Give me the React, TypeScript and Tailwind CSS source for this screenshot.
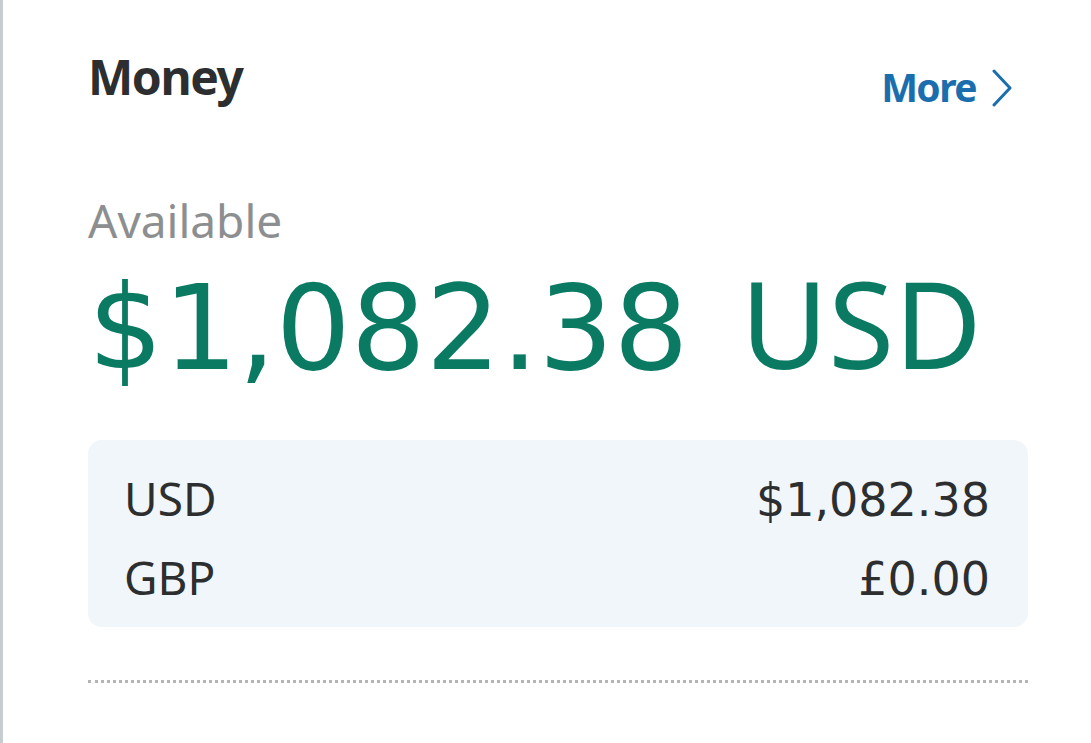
import React from 'react'

const sans = { fontFamily: '"Noto Sans", "Open Sans", sans-serif' }
const nums = { fontFamily: '"DejaVu Sans", "Noto Sans", sans-serif' }

const balances = [
  { code: 'USD', amount: '$1,082.38' },
  { code: 'GBP', amount: '£0.00' },
]

const App: React.FC = () => {
  return (
    <div className="h-[743px] w-full overflow-hidden bg-white border-l-[3px] border-[#c6ccd0]" style={sans}>
      <div className="pl-[85px] pr-[63px]">
        {/* Header */}
        <div className="flex justify-between">
          <h2 className="pt-[53px] text-[48px] leading-[48px] font-bold tracking-[-0.03em] text-[#2c2e2f]">Money</h2>
          <a className="pt-[67px] pr-[15px] flex items-start gap-[15px] text-[39px] leading-[39px] font-bold tracking-[-0.04em] text-[#1a6eae]">
            <span>More</span>
            <svg width="22" height="38" viewBox="0 0 22 38" className="mt-[2px]" fill="none">
              <polyline points="3,2 19,19 3,36" stroke="#1a6eae" strokeWidth="3" strokeLinecap="round" strokeLinejoin="round" />
            </svg>
          </a>
        </div>

        {/* Available */}
        <div className="pt-[90px] text-[46px] leading-[46px] text-[#8c8e90]">Available</div>
        <div className="pt-[20px] text-[120px] leading-[120px] text-[#0b7a63] whitespace-nowrap">
          <span style={nums} className="text-[118px]">$1,082.38</span>
          <span className="ml-[52px]">USD</span>
        </div>

        {/* Per-currency balances */}
        <div className="mt-[52px] rounded-[14px] bg-[#f1f6fb] pl-[36px] pr-[38px] pt-[20px] pb-[9px] text-[#2c2e2f]">
          {balances.map((b) => (
            <div key={b.code} className="flex items-baseline justify-between">
              <span className="text-[46px] leading-[77px]">{b.code}</span>
              <span style={nums} className="text-[46px] leading-[77px]">{b.amount}</span>
            </div>
          ))}
        </div>

        <div className="mt-[53px] border-t-[3px] border-dotted border-[#b4b4b4]" />

        <div className="pt-[56px] text-[46px] leading-[46px] font-bold text-[#1a6eae]">Transfer Money</div>
      </div>
    </div>
  )
}

export default App
